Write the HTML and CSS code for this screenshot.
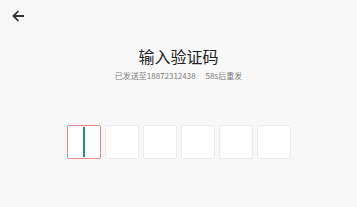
FILE: index.html
```html
<!DOCTYPE html>
<html>
<head>
  <title>输入验证码</title>
  <meta name="viewport" content="width=device-width, initial-scale=1">
  <link rel="stylesheet" href="styles.css">
</head>
<body>
  <div class="header">
    <button class="back">
      <svg width="16" height="16" viewBox="0 0 24 24"><path d="M21 10.6H8.4l5.1-5.1L11.6 3.6 3.2 12l8.4 8.4 1.9-1.9-5.1-5.1H21v-2.8z" fill="#333"/></svg>
    </button>
  </div>
  <div class="content">
    <h1 class="title">输入验证码</h1>
    <p class="sub">已发送至18872312438<span class="resend">58s后重发</span></p>
    <div class="codes">
      <div class="code active"><span class="cursor"></span></div>
      <div class="code"></div>
      <div class="code"></div>
      <div class="code"></div>
      <div class="code"></div>
      <div class="code"></div>
    </div>
  </div>
</body>
</html>
```
FILE: styles.css
```css
body {
  font-family: "Noto Sans CJK SC", "Noto Sans", sans-serif;
  background-color: #f8f8f8;
  margin: 0;
  padding: 0;
}
.header {
  height: 32px;
  display: flex;
  align-items: center;
  padding-left: 10px;
}
.back {
  background: none;
  border: none;
  padding: 0;
  width: 16px;
  height: 16px;
  display: flex;
  align-items: center;
  justify-content: center;
}
.content {
  display: flex;
  flex-direction: column;
  align-items: center;
}
.title {
  font-size: 16px;
  font-weight: normal;
  color: #222;
  line-height: 20px;
  margin: 14px 0 0 0;
}
.sub {
  font-size: 8px;
  color: #7d7d7d;
  line-height: 12px;
  margin: 4px 0 0 0;
}
.resend {
  margin-left: 10px;
}
.codes {
  display: flex;
  gap: 4px;
  margin-top: 43px;
}
.code {
  width: 32px;
  height: 32px;
  background-color: #fff;
  border: 1px solid #ececec;
  border-radius: 2px;
  display: flex;
  justify-content: center;
  align-items: center;
}
.code.active {
  border-color: #e58a8a;
}
.cursor {
  width: 2px;
  height: 30px;
  background-color: #1e9085;
}
```
